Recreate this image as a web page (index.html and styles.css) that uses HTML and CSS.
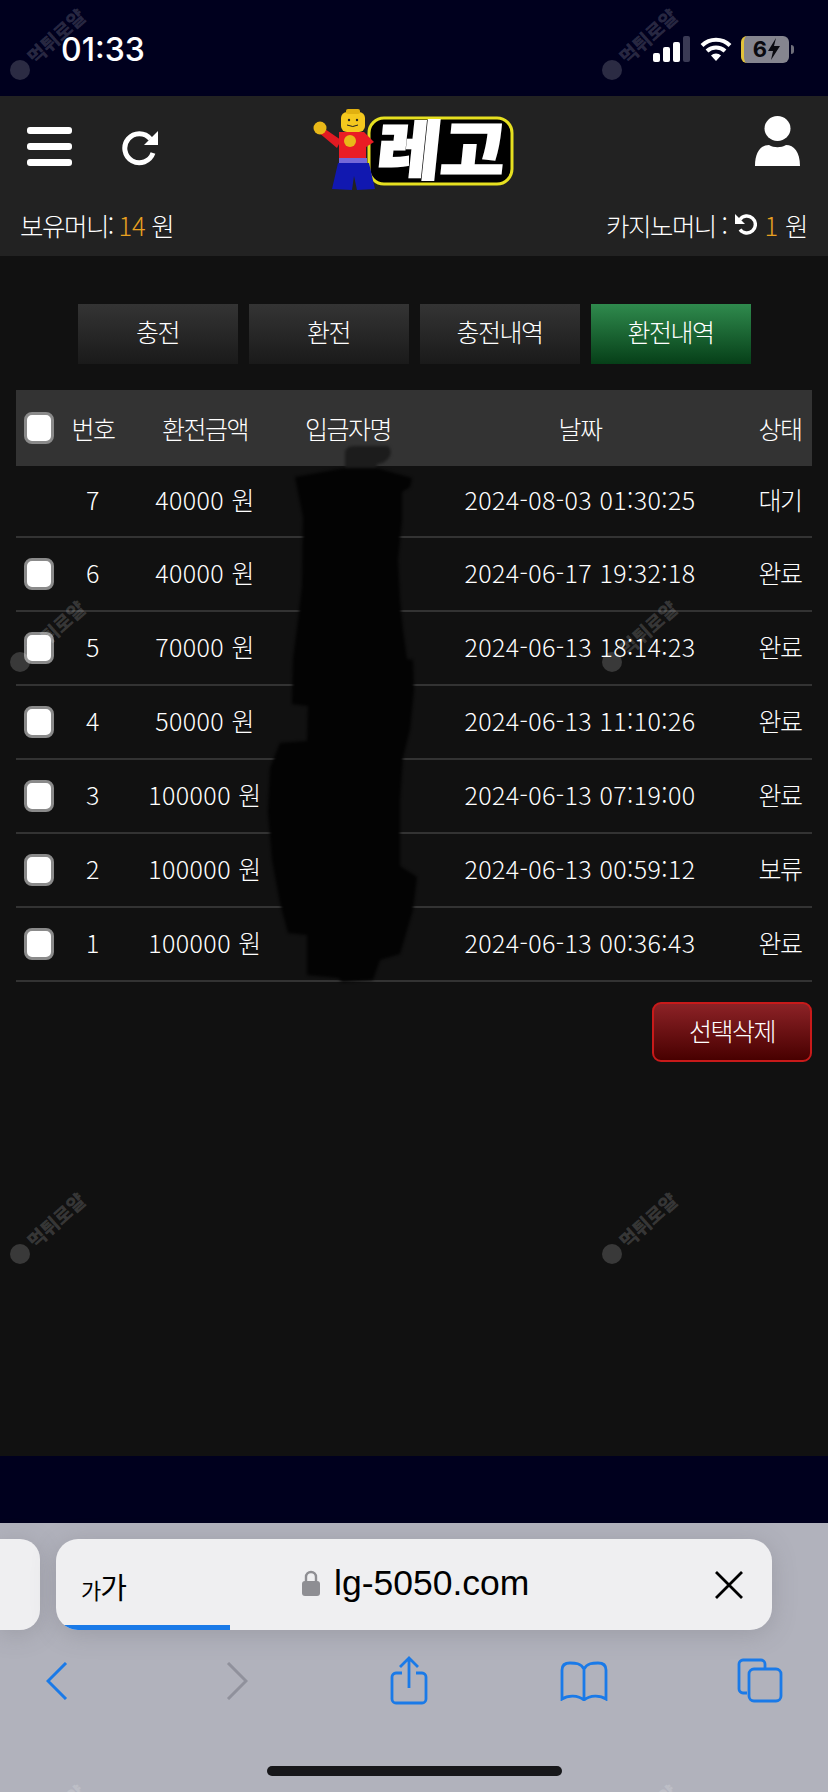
FILE: index.html
```html
<!DOCTYPE html>
<html lang="ko">
<head>
<meta charset="utf-8">
<title>환전내역</title>
<link rel="stylesheet" href="styles.css">
</head>
<body>
<div class="phone">
  <div class="status">
    <span class="clock">01:33</span>
    <div class="status-icons">
      <svg class="signal" viewBox="0 0 37 26"><rect x="0" y="17" width="7" height="9" rx="2" fill="#fff"/><rect x="10" y="11" width="7" height="15" rx="2" fill="#fff"/><rect x="20" y="6" width="7" height="20" rx="2" fill="#fff"/><rect x="30" y="0" width="7" height="26" rx="2" fill="#3a3a55"/></svg>
      <svg class="wifi" viewBox="0 0 32 26"><path d="M2 9.500a20 20 0 0 1 28 0M7 15a13 13 0 0 1 18 0" fill="none" stroke="#fff" stroke-width="4"/><path d="M11 19.500a7 7 0 0 1 10 0L16 25z" fill="#fff"/></svg>
      <div class="battery"><span class="battery-text">6</span><svg class="bolt" viewBox="0 0 12 22"><path d="M8 0 0 13h5l-2 9 9-14H6z" fill="#0a0a10"/></svg></div>
      <span class="nub"></span>
    </div>
  </div>

  <header class="top">
    <div class="top-row">
      <div class="top-left">
        <div class="burger"><span></span><span></span><span></span></div>
        <svg class="reload" viewBox="0 0 37 36"><path d="M31 23a14.500 14.500 0 1 1-2.500-14" fill="none" stroke="#fff" stroke-width="5"/><path d="M36 1v14H22z" fill="#fff"/></svg>
      </div>
      <svg class="logo" viewBox="0 0 204 84">
        <rect class="logo-plate" x="57" y="10" width="143" height="66" rx="15"/>
        <text class="logo-text" x="70" y="66" textLength="128" lengthAdjust="spacingAndGlyphs" transform="skewX(-6)">레고</text>
        <path d="M6 24 10 19 29 32 25 40z" fill="#e21a22"/>
        <path d="M27 24H52L62 34 54 39V51H27z" fill="#ea1c24"/>
        <rect x="27" y="50" width="28" height="5" fill="#7468d8"/>
        <path d="M26 55h31l6 26-18 1-3-14-2 14-20-1z" fill="#1118b0"/>
        <circle cx="8" cy="20" r="6.500" fill="#e8b818"/>
        <rect x="29" y="4" width="24" height="20" rx="6" fill="#f4c81e"/>
        <rect x="34" y="1" width="14" height="5" rx="2" fill="#e0b010"/>
        <circle cx="37" cy="12" r="1.200" fill="#222"/><circle cx="45" cy="12" r="1.200" fill="#222"/>
        <path d="M35 17q6 3 11 0" fill="none" stroke="#222" stroke-width="1"/>
        <circle cx="38" cy="33" r="6" fill="#e8b818"/>
      </svg>
      <div class="top-right">
        <svg class="user" viewBox="0 0 45 50"><ellipse cx="22.500" cy="12.500" rx="13" ry="12.500" fill="#fff"/><path d="M0 50c0-14 6-21 14-21 5 3 12 3 17 0 8 0 14 7 14 21z" fill="#fff"/></svg>
      </div>
    </div>
    <div class="money-row">
      <span>보유머니: <em class="amount">14</em> 원</span>
      <span class="casino">카지노머니 :
        <svg class="undo" viewBox="0 0 24 24"><path d="M6 7.500a8.500 8.500 0 1 1 0 10" fill="none" stroke="#fff" stroke-width="3.400" transform="translate(1 0)"/><path d="M2 2v10h10z" fill="#fff"/></svg>
        <em class="amount">1</em> 원</span>
    </div>
  </header>

  <main class="content">
    <nav class="tabs">
      <a class="tab">충전</a>
      <a class="tab">환전</a>
      <a class="tab">충전내역</a>
      <a class="tab tab-on">환전내역</a>
    </nav>

    <table class="list">
      <thead>
        <tr>
          <th class="c-check"><span class="box"></span></th>
          <th class="c-no">번호</th>
          <th class="c-amount">환전금액</th>
          <th class="c-name">입금자명</th>
          <th class="c-date">날짜</th>
          <th class="c-state">상태</th>
        </tr>
      </thead>
      <tbody>
        <tr class="first"><td></td><td>7</td><td>40000 원</td><td></td><td>2024-08-03 01:30:25</td><td>대기</td></tr>
        <tr><td><span class="box"></span></td><td>6</td><td>40000 원</td><td></td><td>2024-06-17 19:32:18</td><td>완료</td></tr>
        <tr><td><span class="box"></span></td><td>5</td><td>70000 원</td><td></td><td>2024-06-13 18:14:23</td><td>완료</td></tr>
        <tr><td><span class="box"></span></td><td>4</td><td>50000 원</td><td></td><td>2024-06-13 11:10:26</td><td>완료</td></tr>
        <tr><td><span class="box"></span></td><td>3</td><td>100000 원</td><td></td><td>2024-06-13 07:19:00</td><td>완료</td></tr>
        <tr><td><span class="box"></span></td><td>2</td><td>100000 원</td><td></td><td>2024-06-13 00:59:12</td><td>보류</td></tr>
        <tr><td><span class="box"></span></td><td>1</td><td>100000 원</td><td></td><td>2024-06-13 00:36:43</td><td>완료</td></tr>
      </tbody>
    </table>

    <div class="actions"><button class="delete">선택삭제</button></div>
  </main>

  <div class="gap"></div>

  <div class="browser">
    <div class="bars">
      <div class="stub"></div>
      <div class="address">
        <span class="aa"><small class="aa-small">가</small>가</span>
        <div class="url">
          <svg class="lock" viewBox="0 0 18 26"><path d="M4 12V7a5 5 0 0 1 10 0v5" fill="none" stroke="#8e8e93" stroke-width="2.400"/><rect x="0" y="11" width="18" height="15" rx="3" fill="#8e8e93"/></svg>
          <span>lg-5050.com</span>
        </div>
        <svg class="close" viewBox="0 0 28 28"><path d="M1 1l26 26M27 1 1 27" stroke="#000" stroke-width="2.800" fill="none"/></svg>
        <span class="progress"></span>
      </div>
    </div>
    <div class="tools">
      <svg class="t-chev" viewBox="0 0 22 38"><path d="M20 1 2 19l18 18" fill="none" stroke="#1a7ae8" stroke-width="3"/></svg>
      <svg class="t-chev" viewBox="0 0 22 38"><path d="M2 1l18 18L2 37" fill="none" stroke="#90919c" stroke-width="3"/></svg>
      <svg class="t-share" viewBox="0 0 38 49"><path d="M12 17H6a4 4 0 0 0-4 4v22a4 4 0 0 0 4 4h26a4 4 0 0 0 4-4V21a4 4 0 0 0-4-4h-6M19 32V2M10 11l9-9 9 9" fill="none" stroke="#1a7ae8" stroke-width="2.800"/></svg>
      <svg class="t-book" viewBox="0 0 48 40"><path d="M24 8C21 2 15 2 10 2 5 2 2 4 2 9v29c6-4 16-4 22 1 6-5 16-5 22-1V9c0-5-3-7-8-7-5 0-11 0-14 6zM24 8v31" fill="none" stroke="#1a7ae8" stroke-width="2.800"/></svg>
      <svg class="t-tabs" viewBox="0 0 46 45"><path d="M10 35H6a4 4 0 0 1-4-4V6a4 4 0 0 1 4-4h18a4 4 0 0 1 4 4v4" fill="none" stroke="#1a7ae8" stroke-width="2.800"/><rect x="12" y="11" width="32" height="32" rx="5" fill="none" stroke="#1a7ae8" stroke-width="2.800"/></svg>
    </div>
    <div class="home"><span class="home-bar"></span></div>
  </div>

  <svg class="blot" viewBox="0 0 828 1792">
    <path class="blot-knob" d="M345 452Q346 446 354 446L388 446Q392 450 390 456Q385 464 377 464L376 474L345 474Z"/>
    <path class="blot-body" d="M295 477L345 468L376 468L412 478L410 487L402 492L402 520L398 560L400 600L403 630L407 659L413 660L414 690L410 730L403 757L400 800L400 866L417 877L413 910L400 954L380 960L373 980L342 982L338 978L307 975L307 935L288 933L280 903L272 860L268 812L270 768L280 743L307 741L308 706L292 704L293 659L298 620L302 586L303 517Z"/>
  </svg>

  <div class="marks">
    <div class="mark"><span class="seal"></span><span class="mark-text">먹튀로얄</span></div>
    <div class="mark"><span class="seal"></span><span class="mark-text">먹튀로얄</span></div>
    <div class="mark"><span class="seal"></span><span class="mark-text">먹튀로얄</span></div>
    <div class="mark"><span class="seal"></span><span class="mark-text">먹튀로얄</span></div>
    <div class="mark"><span class="seal"></span><span class="mark-text">먹튀로얄</span></div>
    <div class="mark"><span class="seal"></span><span class="mark-text">먹튀로얄</span></div>
    <div class="mark"><span class="mark-text">먹튀로얄</span></div>
    <div class="mark"><span class="mark-text">먹튀로얄</span></div>
  </div>
</div>
</body>
</html>
```
FILE: styles.css
```css
* { box-sizing: border-box; }
html, body { margin: 0; padding: 0; background: #00001e; }
body { font-family: "Noto Sans CJK KR", "Noto Sans", sans-serif; color: #f2f2f2; }
.phone { position: relative; width: 828px; height: 1792px; overflow: hidden; display: flex; flex-direction: column; }

/* status bar */
.status { height: 96px; flex: none; background: #00001e; display: flex; justify-content: space-between; align-items: flex-start; padding: 30px 34px 0 61px; }
.clock { font-family: Inter, Roboto, sans-serif; font-size: 32px; font-weight: 500; line-height: 39px; color: #fff; }
.status-icons { display: flex; align-items: center; height: 26px; margin-top: 6px; }
.signal { width: 37px; height: 26px; margin-right: 10px; }
.wifi { width: 32px; height: 26px; margin-right: 9px; }
.battery { width: 48px; height: 27px; border-radius: 6px; background: #85858f; border-left: 3px solid #e2c23a; display: flex; align-items: center; justify-content: center; gap: 1px; }
.battery-text { font-family: Inter, sans-serif; font-weight: 700; font-size: 22px; line-height: 22px; color: #0a0a10; }
.bolt { width: 12px; height: 22px; }
.nub { width: 3px; height: 9px; margin-left: 2px; background: #6f6f7a; border-radius: 0 3px 3px 0; }

/* header */
.top { height: 160px; flex: none; background: #222; }
.top-row { height: 104px; display: grid; grid-template-columns: 1fr 204px 1fr; padding: 12px 28px 0 27px; }
.top-left { display: flex; align-items: flex-start; gap: 50px; padding-top: 19px; }
.burger { width: 45px; display: flex; flex-direction: column; gap: 9px; }
.burger span { height: 7px; border-radius: 3px; background: #fff; }
.reload { width: 37px; height: 36px; margin-top: 3px; }
.logo { width: 204px; height: 84px; }
.logo-plate { fill: #000; stroke: #e6e020; stroke-width: 3; }
.logo-text { font-family: "Noto Sans CJK KR", sans-serif; font-weight: 900; font-size: 64px; fill: #fff; stroke: #fff; stroke-width: 2; }
.top-right { display: flex; justify-content: flex-end; padding-top: 8px; }
.user { width: 45px; height: 50px; }
.money-row { display: flex; justify-content: space-between; align-items: center; padding: 0 21px 0 20px; height: 48px; font-size: 25.500px; font-weight: 300; letter-spacing: -1.500px; color: #fff; }
.amount { font-style: normal; color: #e8a020; letter-spacing: 0; }
.casino { display: flex; align-items: center; gap: 7px; }
.undo { width: 24px; height: 24px; }

/* content */
.content { height: 1200px; flex: none; background: #111; padding: 48px 16px 0; }
.tabs { display: flex; justify-content: center; gap: 11px; margin-bottom: 26px; }
.tab { width: 160px; height: 60px; display: flex; align-items: center; justify-content: center; font-size: 25px; font-weight: 300; letter-spacing: -1.500px; padding-bottom: 7px; background: linear-gradient(#343434, #1a1a1a); color: #fff; }
.tab-on { background: linear-gradient(#2f8a4d, #063f18); }

.list { width: 796px; border-collapse: collapse; table-layout: fixed; font-size: 25px; font-weight: 300; color: #fff; }
.list th { height: 76px; background: #333; font-weight: 300; letter-spacing: -1.500px; padding: 0; text-align: center; }
.list td { height: 74px; padding: 0 0 4px; text-align: center; border-bottom: 2px solid #333; letter-spacing: .4px; white-space: nowrap; }
.list .first td { height: 71px; }
.c-check { width: 50px; }
.c-no { width: 54px; }
.c-amount { width: 170px; }
.c-name { width: 116px; }
.c-date { width: 348px; }
.c-state { width: 58px; padding-right: 6px !important; }
.list td:last-child { padding-right: 6px; letter-spacing: -1.500px; }
.box { display: block; width: 30px; height: 32px; margin: 4px 0 0 8px; border-radius: 8px; background: #fff; border: 3px solid #8a8a8a; }
.list th .box { margin-top: 0; }

.actions { display: flex; justify-content: flex-end; padding-top: 20px; }
.delete { width: 160px; height: 60px; border: 2px solid #c81a1a; border-radius: 9px; background: linear-gradient(#8c2226, #480000); color: #fff; font-family: inherit; font-size: 25px; font-weight: 300; letter-spacing: -1.500px; padding: 0 0 4px; }

.gap { height: 67px; flex: none; background: #00001e; }

/* browser chrome */
.browser { flex: 1; background: #b1b2bc; display: flex; flex-direction: column; }
.bars { display: flex; gap: 16px; padding-top: 16px; height: 107px; }
.stub { width: 40px; height: 91px; background: #efeff1; border-radius: 0 20px 20px 0; box-shadow: 0 4px 24px rgba(90, 90, 100, .25); }
.address { position: relative; width: 716px; height: 91px; background: #efeff1; border-radius: 22px; display: flex; align-items: center; justify-content: space-between; padding: 0 29px 0 25px; overflow: hidden; box-shadow: 0 4px 24px rgba(90, 90, 100, .25); }
.aa { font-size: 29px; font-weight: 400; color: #000; letter-spacing: -1px; padding-top: 3px; }
.aa-small { font-size: 22px; }
.url { display: flex; align-items: center; gap: 14px; font-family: "Liberation Sans", sans-serif; font-size: 35.500px; color: #000; position: absolute; left: 246px; top: 21px; line-height: 46px; }
.lock { width: 18px; height: 26px; }
.close { width: 28px; height: 28px; }
.progress { position: absolute; left: 0; bottom: 0; width: 174px; height: 5px; background: #1a7ae8; }
.tools { display: grid; grid-template-columns: 114px 246px 98px 252px 100px; justify-items: center; align-items: center; padding-top: 26px; height: 72px; }
.t-chev { width: 22px; height: 38px; }
.t-share { width: 38px; height: 49px; }
.t-book { width: 48px; height: 40px; }
.t-tabs { width: 46px; height: 45px; }
.home { display: flex; justify-content: center; padding-top: 64px; }
.home-bar { width: 295px; height: 10px; border-radius: 5px; background: #17171a; }

/* overlays */
.blot { position: absolute; inset: 0; width: 828px; height: 1792px; pointer-events: none; filter: blur(1.500px); }
.blot-knob { fill: #1c1c1c; }
.blot-body { fill: #030303; }
.marks { position: absolute; left: 0; top: 0; display: grid; grid-template-columns: 592px 236px; grid-auto-rows: 592px; pointer-events: none; }
.mark { position: relative; }
.mark-text { position: absolute; left: 21px; top: 23px; font-size: 19px; font-weight: 900; line-height: 26px; color: rgba(255, 255, 255, .17); transform: rotate(-42deg); white-space: nowrap; }
.seal { position: absolute; left: 10px; top: 60px; width: 20px; height: 20px; border-radius: 50%; background: rgba(255, 255, 255, .17); }
```
